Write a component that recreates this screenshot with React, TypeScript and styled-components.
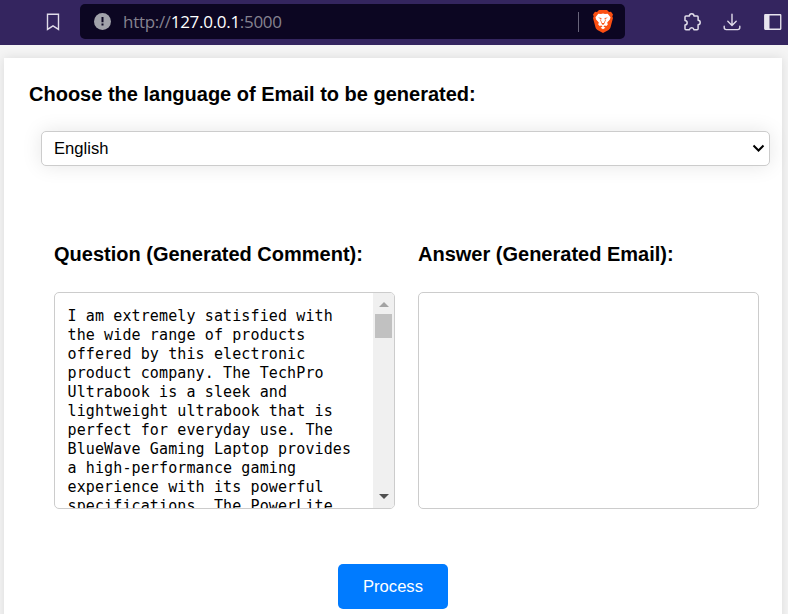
import React from "react";
import styled, { createGlobalStyle } from "styled-components";

const GlobalStyle = createGlobalStyle`
  * { box-sizing: border-box; }
  html, body { margin: 0; padding: 0; overflow: hidden; }
  body { background: #f4f4f4; font-family: "Liberation Sans", Arial, sans-serif; color: #000; }
`;

const Window = styled.div`
  width: 788px;
  height: 614px;
  overflow: hidden;
  display: flex;
  flex-direction: column;
`;

const BrowserBar = styled.header`
  flex: none;
  height: 45px;
  display: flex;
  align-items: flex-start;
  padding: 4px 0 0 43px;
  background: #34255f;
`;

const BarIcon = styled.span<{ $left?: number }>`
  flex: none;
  display: flex;
  align-items: center;
  justify-content: center;
  width: 20px;
  height: 35px;
  margin-left: ${(p) => p.$left ?? 0}px;
`;

const AddressField = styled.div`
  flex: none;
  display: flex;
  align-items: center;
  width: 545px;
  height: 35px;
  margin-left: 17px;
  padding: 0 12px 0 14px;
  border-radius: 5px;
  background: #0c0622;
`;

const Url = styled.span`
  flex: 1;
  margin-left: 12px;
  font: 17px/35px "Open Sans", "Noto Sans", sans-serif;
  letter-spacing: -0.3px;
  color: #85828f;
`;

const Host = styled.span`
  color: #fff;
`;

const Separator = styled.span`
  width: 1px;
  height: 20px;
  margin-right: 14px;
  background: #68647a;
`;

const Card = styled.main`
  flex: none;
  width: 778px;
  height: 640px;
  margin: 13px 0 0 4px;
  padding: 24px 12px 0 25px;
  background: #fff;
  box-shadow: 0 0 10px rgba(0, 0, 0, 0.1);
`;

const Heading = styled.h3`
  margin: 0;
  font-size: 20px;
  line-height: 24px;
  font-weight: bold;
  white-space: nowrap;
`;

const Select = styled.div`
  display: flex;
  align-items: center;
  justify-content: space-between;
  width: 729px;
  height: 35px;
  margin: 25px 0 0 12px;
  padding: 0 4px 0 12px;
  border: 1px solid #ccc;
  border-radius: 5px;
  background: #fff;
  box-shadow: 0 0 20px rgba(0, 0, 0, 0.1);
  font-size: 16.6px;
`;

const Columns = styled.section`
  display: flex;
  gap: 23px;
  margin: 76px 0 0 25px;
`;

const Column = styled.div`
  width: 341px;
`;

const TextBox = styled.div`
  display: flex;
  width: 341px;
  height: 217px;
  margin-top: 26px;
  border: 1px solid #ccc;
  border-radius: 5px;
  overflow: hidden;
`;

const Comment = styled.div`
  flex: 1;
  padding: 14px 0 0 12.5px;
  font: 15px/19px "DejaVu Sans Mono", monospace;
  letter-spacing: 0.12px;
  white-space: pre;
`;

const Scrollbar = styled.div`
  flex: none;
  display: flex;
  flex-direction: column;
  align-items: center;
  justify-content: space-between;
  width: 21px;
  padding: 9px 0;
  background: #f0f0f0;
`;

const ScrollTop = styled.div`
  display: flex;
  flex-direction: column;
  align-items: center;
  gap: 7px;
`;

const Thumb = styled.div`
  width: 17px;
  height: 24px;
  background: #c1c1c1;
`;

const ProcessButton = styled.button`
  display: block;
  width: 110px;
  height: 45px;
  margin: 55px 0 0 309px;
  padding: 0;
  border: 0;
  border-radius: 5px;
  background: #007bff;
  color: #fff;
  font: 16.6px "Liberation Sans", Arial, sans-serif;
`;

const ArrowSvg = styled.svg`
  display: block;
`;

const lines = [
  "I am extremely satisfied with",
  "the wide range of products",
  "offered by this electronic",
  "product company. The TechPro",
  "Ultrabook is a sleek and",
  "lightweight ultrabook that is",
  "perfect for everyday use. The",
  "BlueWave Gaming Laptop provides",
  "a high-performance gaming",
  "experience with its powerful",
  "specifications. The PowerLite",
];

const Arrow = ({ down = false }: { down?: boolean }) => (
  <ArrowSvg width="10" height="5" viewBox="0 0 10 5">
    <path d={down ? "M0 0h10L5 5z" : "M0 5h10L5 0z"} fill={down ? "#505050" : "#a3a3a3"} />
  </ArrowSvg>
);

const BookmarkIcon = () => (
  <svg width="14" height="18" viewBox="0 0 14 18" fill="none" stroke="#e0dce9" strokeWidth="1.4">
    <path d="M1.5 1.2h11v15.2L7 12.8 1.5 16.4z" />
  </svg>
);

const InfoIcon = () => (
  <svg width="17" height="17" viewBox="0 0 17 17">
    <circle cx="8.5" cy="8.5" r="8.5" fill="#a1a2aa" />
    <path d="M7.5 4h2v5.2h-2zM7.5 10.5h2v2h-2z" fill="#0c0622" />
  </svg>
);

const LionIcon = () => (
  <svg width="20" height="23" viewBox="0 0 20 23">
    <path d="M6 0h8l2 2 2-.3L20 4.5l-.7 2L20 8l-2.4 9c-.4 1.4-1 2.2-2 2.9L10 23l-5.6-3.1c-1-.7-1.6-1.5-2-2.9L0 8l.7-1.5-.7-2L2 1.7 4 2z" fill="#fb4f12" />
    <path d="M5.3 3.7 8 4.1 10 3.5l2 .6 2.7-.4 2.8 3.5-.6 2.2-2.7 3.2.6 2-1.4 1.5-1.7-.7-1.3 1 2 1.3L10 19.3l-2.4-1.6 2-1.3-1.3-1-1.7.7L5.2 14.6l.6-2-2.7-3.2-.6-2.2z" fill="#fff" />
    <path d="m5.1 7.4 3.4.5L8 10.2l1 2.7h2l1-2.7-.5-2.3 3.4-.5-1.7 1.2-1 .3.5 1.5-1.5 3.5L10 15l-1.2-1.1-1.5-3.5.5-1.5-1-.3z" fill="#fb4f12" />
    <path d="M9.2 6.5h1.6l-.3 6h-1z" fill="#fff" />
  </svg>
);

const PuzzleIcon = () => (
  <svg width="18" height="18" viewBox="0 0 18 18" fill="none" stroke="#e0dce9" strokeWidth="1.5" strokeLinejoin="round">
    <path d="M3 3h3.4c0-3 4.6-3 4.6 0h3.2c.6 0 .9.3.9.9v3.3c2.8.1 2.8 4.4 0 4.5v4c0 .7-.3 1-1 1h-3.2c-.3-2.5-4-2.5-4.4 0H3c-.7 0-1-.3-1-1v-3.6c2.9-.3 2.9-4.4 0-4.7V4c0-.7.3-1 1-1z" />
  </svg>
);

const DownloadIcon = () => (
  <svg width="18" height="18" viewBox="0 0 18 18" fill="none" stroke="#e0dce9" strokeWidth="1.4" strokeLinecap="round" strokeLinejoin="round">
    <path d="M9 1.3v11M4.8 8.2 9 12.4l4.2-4.2M1.2 13.2v1.3c0 1.4.8 2.1 2.1 2.1h11.4c1.4 0 2.1-.7 2.1-2.1v-1.3" />
  </svg>
);

const SidebarIcon = () => (
  <svg width="18" height="16" viewBox="0 0 18 16">
    <rect x=".75" y=".75" width="16" height="14.5" rx=".5" fill="none" stroke="#e8e5ee" strokeWidth="1.3" />
    <path d="M1 1h4.5v14H1z" fill="#e8e5ee" />
  </svg>
);

export default function App() {
  return (
    <>
      <GlobalStyle />
      <Window>
        <BrowserBar>
          <BarIcon><BookmarkIcon /></BarIcon>
          <AddressField>
            <InfoIcon />
            <Url>http://<Host>127.0.0.1</Host>:5000</Url>
            <Separator />
            <LionIcon />
          </AddressField>
          <BarIcon $left={57}><PuzzleIcon /></BarIcon>
          <BarIcon $left={20}><DownloadIcon /></BarIcon>
          <BarIcon $left={21}><SidebarIcon /></BarIcon>
        </BrowserBar>
        <Card>
          <Heading>Choose the language of Email to be generated:</Heading>
          <Select>
            English
            <svg width="13" height="9" viewBox="0 0 13 9" fill="none" stroke="#000" strokeWidth="2">
              <path d="m1.5 1.5 5 5 5-5" />
            </svg>
          </Select>
          <Columns>
            <Column>
              <Heading>Question (Generated Comment):</Heading>
              <TextBox>
                <Comment>{lines.join("\n")}</Comment>
                <Scrollbar>
                  <ScrollTop>
                    <Arrow />
                    <Thumb />
                  </ScrollTop>
                  <Arrow down />
                </Scrollbar>
              </TextBox>
            </Column>
            <Column>
              <Heading>Answer (Generated Email):</Heading>
              <TextBox />
            </Column>
          </Columns>
          <ProcessButton>Process</ProcessButton>
        </Card>
      </Window>
    </>
  );
}
